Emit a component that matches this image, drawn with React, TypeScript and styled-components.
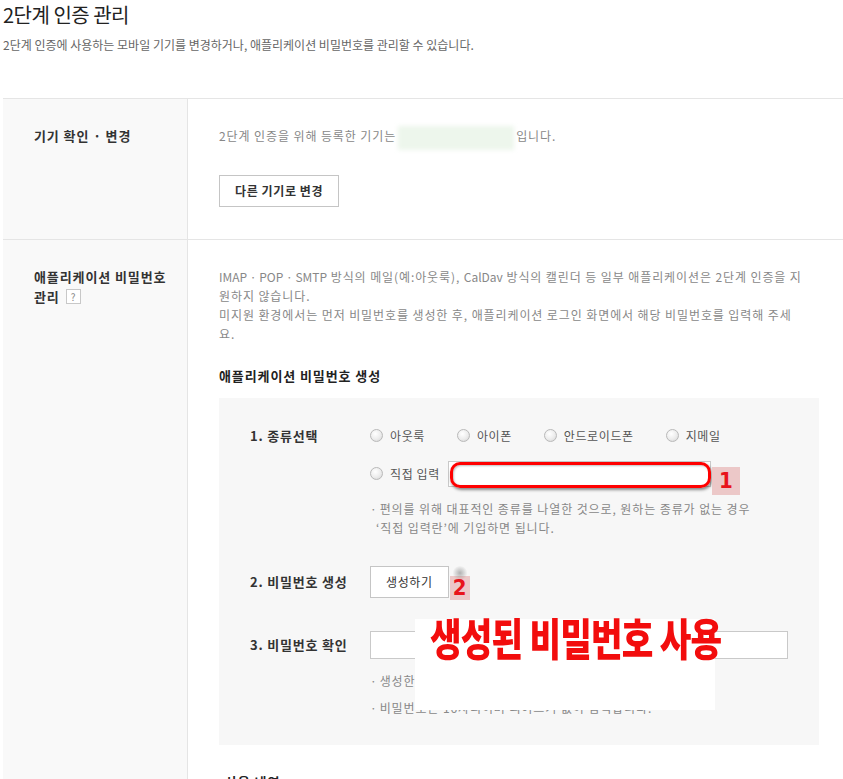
import styled, { createGlobalStyle } from "styled-components";

const GlobalStyle = createGlobalStyle`
  body {
    margin: 0;
    background: #fff;
    font-family: "Noto Sans CJK KR", "Noto Sans", sans-serif;
    color: #333;
  }
`;

const Page = styled.div`
  padding: 0 0 0 3px;
  width: 840px;
`;

const Title = styled.h1`
  margin: 0;
  padding-top: 2px;
  font-size: 20px;
  line-height: 26px;
  font-weight: 400;
  letter-spacing: -0.5px;
  color: #222;
`;

const Subtitle = styled.p`
  margin: 9px 0 0;
  font-size: 12px;
  line-height: 16px;
  color: #666;
`;

const Table = styled.div`
  margin-top: 45px;
  border-top: 1px solid #e5e5e5;
`;

const Row = styled.div`
  display: grid;
  grid-template-columns: 185px 1fr;
  border-bottom: 1px solid #e5e5e5;
  &:last-child {
    border-bottom: 0;
  }
`;

const Head = styled.div<{ $top: number }>`
  background: #f9f9f9;
  border-right: 1px solid #e5e5e5;
  padding: ${(p) => p.$top}px 16px 0 31px;
  font-size: 13px;
  line-height: 20px;
  font-weight: 700;
  letter-spacing: 0.9px;
  color: #333;
`;

const Help = styled.span`
  display: inline-block;
  width: 13px;
  height: 13px;
  margin-left: 6px;
  border: 1px solid #c8c8c8;
  background: #fff;
  color: #888;
  font-size: 10px;
  line-height: 13px;
  text-align: center;
  font-weight: 400;
  letter-spacing: 0;
  vertical-align: 1px;
`;

const Body = styled.div<{ $top: number; $bottom: number }>`
  padding: ${(p) => p.$top}px 24px ${(p) => p.$bottom}px 31px;
`;

const Text = styled.p`
  margin: 0;
  font-size: 12px;
  line-height: 19px;
  color: #888;
  letter-spacing: 0.9px;
  white-space: nowrap;
`;

const Latin = styled.span`
  letter-spacing: 0;
`;

const Masked = styled.span`
  display: inline-block;
  width: 116px;
  height: 24px;
  margin: -4px 2px;
  vertical-align: middle;
  background: #edf6ec;
  filter: blur(2px);
`;

const Button = styled.button<{ $bold?: boolean }>`
  display: block;
  height: 32px;
  padding: 0 15px;
  border: 1px solid #c5c5c5;
  background: #fff;
  font-family: inherit;
  font-size: 12px;
  letter-spacing: 0.6px;
  font-weight: ${(p) => (p.$bold ? 700 : 400)};
  color: #333;
  cursor: pointer;
`;

const ChangeButton = styled(Button)`
  margin-top: 29px;
`;

const SectionTitle = styled.h3`
  margin: 24px 0 13px;
  font-size: 13px;
  line-height: 18px;
  font-weight: 700;
  letter-spacing: 0.9px;
  color: #222;
`;

const Box = styled.div`
  position: relative;
  background: #f7f7f7;
  padding: 25px 24px 28px 31px;
  display: flex;
  flex-direction: column;
  gap: 29px;
`;

const Step = styled.div<{ $mt?: number }>`
  display: grid;
  grid-template-columns: 120px 1fr;
  margin-top: ${(p) => p.$mt ?? 0}px;
`;

const StepLabel = styled.div<{ $h: number }>`
  font-size: 13px;
  font-weight: 700;
  letter-spacing: 0.8px;
  line-height: ${(p) => p.$h}px;
  color: #333;
`;

const StepBody = styled.div`
  display: flex;
  flex-direction: column;
`;

const RadioLine = styled.div<{ $mt?: number }>`
  display: flex;
  align-items: flex-start;
  height: 26px;
  margin-top: ${(p) => p.$mt ?? 0}px;
`;

const Option = styled.label<{ $mr?: number }>`
  display: inline-flex;
  align-items: center;
  gap: 7px;
  height: 26px;
  margin-right: ${(p) => p.$mr ?? 32}px;
  font-size: 12px;
  letter-spacing: 0.6px;
  color: #555;
  white-space: nowrap;
`;

const RadioDot = styled.span`
  width: 11px;
  height: 11px;
  border-radius: 50%;
  border: 1px solid #b9b9b9;
  background: radial-gradient(circle at 40% 35%, #fff 0%, #ececec 55%, #d2d2d2 100%);
`;

const FreeInput = styled.div`
  position: relative;
  width: 263px;
  height: 26px;
  border: 1px solid #c9c9c9;
  box-sizing: border-box;
  background: #fff;
`;

const RedRing = styled.span`
  position: absolute;
  left: 1px;
  top: 0;
  right: -1px;
  bottom: -2px;
  border: 3px solid #f00;
  border-radius: 10px;
  box-shadow: 1px 2px 3px rgba(0, 0, 0, 0.45), inset 1px 1px 2px rgba(0, 0, 0, 0.25);
`;

const Badge = styled.span<{ $w: number; $h: number; $mt: number }>`
  position: relative;
  flex: none;
  width: ${(p) => p.$w}px;
  height: ${(p) => p.$h}px;
  margin: ${(p) => p.$mt}px 0 0 1px;
  background: #ecc8c8;
  color: #e8141c;
  font-family: "DejaVu Sans Condensed", "DejaVu Sans", sans-serif;
  font-weight: 700;
  font-size: 22px;
  line-height: ${(p) => p.$h}px;
  text-align: center;
`;

const ShadowBlob = styled.span`
  position: absolute;
  left: 2px;
  top: -10px;
  width: 16px;
  height: 14px;
  border-radius: 50%;
  background: radial-gradient(circle, rgba(120, 120, 120, 0.55) 0%, rgba(160, 160, 160, 0) 70%);
`;

const Notes = styled.div<{ $mt: number; $gap?: number }>`
  margin-top: ${(p) => p.$mt}px;
  display: flex;
  flex-direction: column;
  gap: ${(p) => p.$gap ?? 0}px;
`;

const Note = styled.p`
  margin: 0;
  font-size: 12px;
  line-height: 19px;
  color: #888;
  letter-spacing: 0.9px;
  white-space: nowrap;
  &::before {
    content: "·";
    margin-right: 2px;
  }
`;

const Indent = styled.span`
  padding-left: 6px;
`;

const GenLine = styled.div`
  display: flex;
  align-items: flex-start;
  height: 32px;
`;

const ConfirmInput = styled.input`
  width: 418px;
  height: 28px;
  box-sizing: border-box;
  border: 1px solid #c9c9c9;
  background: #fff;
  padding: 0 8px;
`;

const Overlay = styled.div`
  position: absolute;
  left: 196px;
  top: 221px;
  width: 300px;
  height: 91px;
  background: #fff;
`;

const OverlayText = styled.span`
  position: absolute;
  left: 15px;
  top: -8px;
  display: inline-block;
  white-space: nowrap;
  font-size: 44px;
  line-height: 52px;
  font-weight: 900;
  color: #f20d0d;
  transform: scaleX(0.78);
  transform-origin: left center;
  letter-spacing: -1px;
`;

const NextTitle = styled(SectionTitle)`
  margin: 28px 0 0 6px;
`;

export default function App() {
  return (
    <Page>
      <GlobalStyle />
      <Title>2단계 인증 관리</Title>
      <Subtitle>
        2단계 인증에 사용하는 모바일 기기를 변경하거나, 애플리케이션 비밀번호를 관리할 수 있습니다.
      </Subtitle>

      <Table>
        <Row>
          <Head $top={27}>기기 확인 · 변경</Head>
          <Body $top={27} $bottom={32}>
            <Text>
              2단계 인증을 위해 등록한 기기는
              <Masked />
              입니다.
            </Text>
            <ChangeButton $bold>다른 기기로 변경</ChangeButton>
          </Body>
        </Row>

        <Row>
          <Head $top={27}>
            애플리케이션 비밀번호
            <br />
            관리
            <Help>?</Help>
          </Head>
          <Body $top={27} $bottom={0}>
            <Text>
              <Latin>IMAP · POP · SMTP</Latin> 방식의 메일(예:아웃룩), <Latin>CalDav</Latin> 방식의 캘린더 등 일부
              애플리케이션은 2단계 인증을 지
              <br />
              원하지 않습니다.
              <br />
              미지원 환경에서는 먼저 비밀번호를 생성한 후, 애플리케이션 로그인 화면에서 해당 비밀번호를 입력해 주세
              <br />
              요.
            </Text>

            <SectionTitle>애플리케이션 비밀번호 생성</SectionTitle>

            <Box>
              <Step>
                <StepLabel $h={26}>1. 종류선택</StepLabel>
                <StepBody>
                  <RadioLine>
                    <Option>
                      <RadioDot />
                      아웃룩
                    </Option>
                    <Option>
                      <RadioDot />
                      아이폰
                    </Option>
                    <Option>
                      <RadioDot />
                      안드로이드폰
                    </Option>
                    <Option>
                      <RadioDot />
                      지메일
                    </Option>
                  </RadioLine>
                  <RadioLine $mt={12}>
                    <Option $mr={8}>
                      <RadioDot />
                      직접 입력
                    </Option>
                    <FreeInput>
                      <RedRing />
                    </FreeInput>
                    <Badge $w={28} $h={28} $mt={6}>
                      1
                    </Badge>
                  </RadioLine>
                  <Notes $mt={12}>
                    <Note>편의를 위해 대표적인 종류를 나열한 것으로, 원하는 종류가 없는 경우</Note>
                    <Text>
                      <Indent>‘직접 입력란’에 기입하면 됩니다.</Indent>
                    </Text>
                  </Notes>
                </StepBody>
              </Step>

              <Step>
                <StepLabel $h={32}>2. 비밀번호 생성</StepLabel>
                <GenLine>
                  <Button>생성하기</Button>
                  <Badge $w={20} $h={24} $mt={10}>
                    <ShadowBlob />2
                  </Badge>
                </GenLine>
              </Step>

              <Step $mt={4}>
                <StepLabel $h={28}>3. 비밀번호 확인</StepLabel>
                <StepBody>
                  <ConfirmInput readOnly />
                  <Notes $mt={12} $gap={8}>
                    <Note>생성한 비밀번호를 애플리케이션에 입력하세요.</Note>
                    <Note>비밀번호는 16자리이며 띄어쓰기 없이 입력합니다.</Note>
                  </Notes>
                </StepBody>
              </Step>

              <Overlay>
                <OverlayText>생성된 비밀번호 사용</OverlayText>
              </Overlay>
            </Box>

            <NextTitle>사용 내역</NextTitle>
          </Body>
        </Row>
      </Table>
    </Page>
  );
}
